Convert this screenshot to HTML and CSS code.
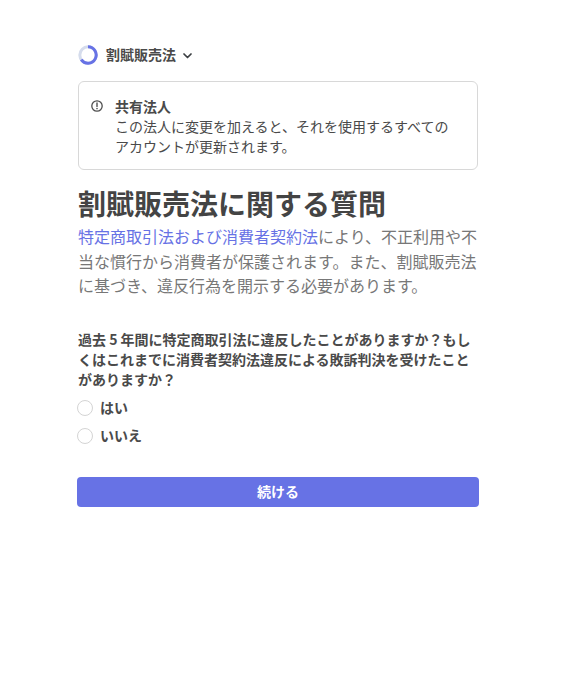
FILE: index.html
```html
<!DOCTYPE html>
<html lang="ja">
<head>
<meta charset="utf-8">
<title>割賦販売法に関する質問</title>
<link rel="stylesheet" href="styles.css">
</head>
<body>
<main class="page">
  <div class="topic">
    <svg class="spinner" width="20" height="20" viewBox="0 0 20 20">
      <circle cx="10" cy="10" r="8.2" fill="none" stroke="#d5dcec" stroke-width="3"/>
      <path d="M10 1.8A8.2 8.2 0 1 1 3.2 14.6" fill="none" stroke="#6772e5" stroke-width="3"/>
    </svg>
    <span class="topic-name">割賦販売法</span>
    <svg class="chev" width="9" height="6" viewBox="0 0 9 6"><path d="M1 1l3.5 3.5L8 1" fill="none" stroke="#3c4043" stroke-width="1.7" stroke-linecap="round" stroke-linejoin="round"/></svg>
  </div>
  <section class="notice">
    <svg class="info" width="12" height="12" viewBox="0 0 12 12">
      <circle cx="6" cy="6" r="5.2" fill="none" stroke="#4f4f4f" stroke-width="1.3"/>
      <path d="M6 3v3.4" stroke="#4f4f4f" stroke-width="1.4" stroke-linecap="round"/>
      <circle cx="6" cy="8.6" r=".8" fill="#4f4f4f"/>
    </svg>
    <div class="notice-body">
      <div class="notice-title">共有法人</div>
      <div>この法人に変更を加えると、それを使用するすべての<br>アカウントが更新されます。</div>
    </div>
  </section>
  <h1 class="title">割賦販売法に関する質問</h1>
  <p class="lead"><a class="link" href="#">特定商取引法および消費者契約法</a>により、不正利用や不当な慣行から消費者が保護されます。また、割賦販売法に基づき、違反行為を開示する必要があります。</p>
  <p class="question">過去 5 年間に特定商取引法に違反したことがありますか？もしくはこれまでに消費者契約法違反による敗訴判決を受けたことがありますか？</p>
  <div class="options">
    <label class="option"><span class="radio"></span><span class="option-label">はい</span></label>
    <label class="option"><span class="radio"></span><span class="option-label">いいえ</span></label>
  </div>
  <button class="submit" type="button">続ける</button>
</main>
</body>
</html>
```
FILE: styles.css
```css
* { box-sizing: border-box; }
html, body { margin: 0; padding: 0; background: #fff; }
body {
  font-family: "Noto Sans CJK JP", "Noto Sans", sans-serif;
  color: #4a4a4a;
}
.page {
  width: 402px;
  margin-left: 77px;
  padding-top: 45px;
}
.topic {
  display: flex;
  align-items: center;
  height: 20px;
  padding-left: 1px;
}
.spinner { flex: none; }
.topic-name {
  margin-left: 8px;
  padding-bottom: 2px;
  font-size: 14px;
  font-weight: 700;
  line-height: 19px;
}
.chev { margin: 1px 0 0 7px; }
.notice {
  display: flex;
  margin: 16px 1px 0;
  height: 89px;
  padding: 14px 12px;
  border: 1px solid #d8d8d8;
  border-radius: 6px;
}
.info { flex: none; margin-top: 4px; }
.notice-body {
  margin-left: 12px;
  font-size: 14px;
  line-height: 20px;
}
.notice-title { font-weight: 700; }
.title {
  margin: 14px 1px 0;
  font-size: 28px;
  line-height: 38px;
  font-weight: 700;
  color: #444;
}
.lead {
  margin: 2px 1px 0;
  font-size: 16px;
  line-height: 24.5px;
  color: #777;
}
.link { color: #6772e5; text-decoration: none; }
.question {
  margin: 31px 1px 0;
  font-size: 14px;
  line-height: 20px;
  font-weight: 700;
}
.options { margin-top: 8px; display: flex; flex-direction: column; gap: 6px; }
.option {
  display: flex;
  align-items: center;
  height: 22px;
  font-size: 14px;
  font-weight: 700;
}
.option-label { padding-bottom: 2px; }
.radio {
  width: 16px;
  height: 16px;
  margin-right: 7px;
  border: 1px solid #d4d4d4;
  border-radius: 50%;
  background: #fff;
}
.submit {
  display: block;
  width: 100%;
  height: 30px;
  margin-top: 30px;
  padding: 0 0 2px;
  border: 0;
  border-radius: 4px;
  background: #6772e5;
  color: #fff;
  font-family: inherit;
  font-size: 14px;
  font-weight: 700;
}
```
